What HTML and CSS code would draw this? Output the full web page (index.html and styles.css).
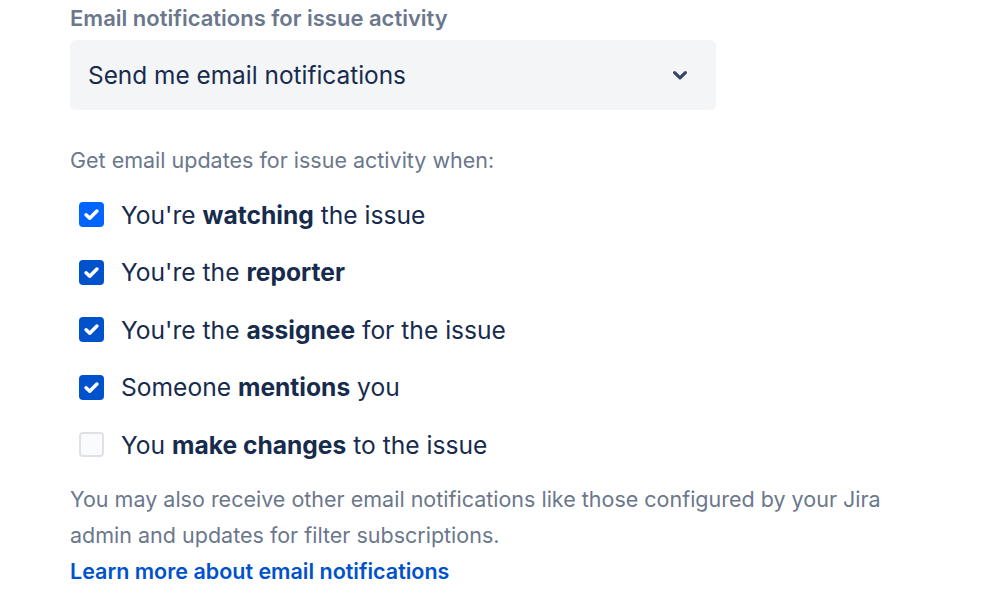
FILE: index.html
```html
<!DOCTYPE html>
<html lang="en">
<head>
    <meta charset="UTF-8" />
    <title>Email notifications</title>
    <link rel="stylesheet" href="styles.css">
</head>
<body>
    <div class="settings">
        <div class="field-label">Email notifications for issue activity</div>
        <div class="select">
            <span>Send me email notifications</span>
            <svg class="chevron" width="20" height="20" viewBox="0 0 20 20">
                <path d="M4.6 7.6 L10 12.8 L15.4 7.6" fill="none" stroke="#344563" stroke-width="3.2" stroke-linecap="round" stroke-linejoin="round"/>
            </svg>
        </div>

        <p class="hint">Get email updates for issue activity when:</p>

        <ul class="options">
            <li>
                <span class="box checked focus"><svg viewBox="0 0 24 24"><path d="M6.8 12.3 L10.3 15.6 L17.2 8.7" /></svg></span>
                <span>You're <b>watching</b> the issue</span>
            </li>
            <li>
                <span class="box checked"><svg viewBox="0 0 24 24"><path d="M6.8 12.3 L10.3 15.6 L17.2 8.7" /></svg></span>
                <span>You're the <b>reporter</b></span>
            </li>
            <li>
                <span class="box checked"><svg viewBox="0 0 24 24"><path d="M6.8 12.3 L10.3 15.6 L17.2 8.7" /></svg></span>
                <span>You're the <b>assignee</b> for the issue</span>
            </li>
            <li>
                <span class="box checked"><svg viewBox="0 0 24 24"><path d="M6.8 12.3 L10.3 15.6 L17.2 8.7" /></svg></span>
                <span>Someone <b>mentions</b> you</span>
            </li>
            <li>
                <span class="box"></span>
                <span>You <b>make changes</b> to the issue</span>
            </li>
        </ul>

        <p class="note">You may also receive other email notifications like those configured by your Jira admin and updates for filter subscriptions.</p>
        <a class="learn" href="#">Learn more about email notifications</a>
    </div>
</body>
</html>
```

FILE: styles.css
```css
body {
    margin: 0;
    font-family: Inter, "Noto Sans", sans-serif;
    background: #fff;
    color: #172b4d;
}
.settings {
    width: 840px;
    padding: 5px 0 0 70px;
}
.field-label {
    font-size: 22px;
    font-weight: 600;
    color: #6b778c;
    line-height: 26px;
}
.select {
    margin-top: 9px;
    width: 646px;
    height: 70px;
    box-sizing: border-box;
    background: #f4f5f7;
    border-radius: 6px;
    display: flex;
    align-items: center;
    justify-content: space-between;
    padding: 0 26px 0 18px;
    font-size: 24.4px;
    color: #172b4d;
}
.chevron {
    display: block;
}
.hint {
    margin: 37px 0 0;
    font-size: 21.5px;
    line-height: 26px;
    color: #6b778c;
}
.options {
    list-style: none;
    margin: 13px 0 0;
    padding: 0 0 0 9px;
}
.options li {
    display: flex;
    align-items: center;
    gap: 17px;
    height: 57.5px;
    font-size: 24.6px;
    color: #172b4d;
}
.options b {
    font-weight: 700;
}
.box {
    width: 25px;
    height: 25px;
    box-sizing: border-box;
    border-radius: 4px;
    border: 2px solid #dfe1e6;
    background: #fafbfc;
    flex-shrink: 0;
}
.box.checked {
    border: none;
    background: #0052cc;
}
.box.focus {
    background: #0065ff;
}
.box svg {
    display: block;
    width: 25px;
    height: 25px;
}
.box path {
    fill: none;
    stroke: #fff;
    stroke-width: 3.4;
    stroke-linecap: round;
    stroke-linejoin: round;
}
.note {
    margin: 7px 0 0;
    font-size: 21.5px;
    line-height: 36px;
    color: #6b778c;
    width: 830px;
}
.learn {
    display: block;
    font-size: 21.5px;
    line-height: 36px;
    font-weight: 600;
    color: #0052cc;
    text-decoration: none;
}
```
